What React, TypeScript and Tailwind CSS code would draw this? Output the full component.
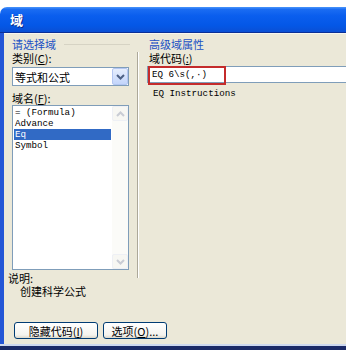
import React from "react";

const cjk = { fontFamily: '"Noto Sans CJK SC", "Noto Sans", sans-serif' };
const mono = { fontFamily: '"Liberation Mono", "DejaVu Sans Mono", monospace' };

function Chevron({ color, up }: { color: string; up?: boolean }) {
  return (
    <svg width="9" height="6" viewBox="0 0 9 6">
      <path
        d={up ? "M1 5 L4.5 1.5 L8 5" : "M1 1 L4.5 4.5 L8 1"}
        fill="none"
        stroke={color}
        strokeWidth="2"
      />
    </svg>
  );
}

export default function App() {
  return (
    <div className="w-[346px] h-[350px] bg-white overflow-hidden flex flex-col" style={cjk}>
      <div className="h-[7px] shrink-0 bg-white" />
      <div className="h-[26px] shrink-0 rounded-tl-[7px] border-b border-[#0a2f96] bg-[linear-gradient(to_bottom,#4a95fa_0%,#1a6cf2_10%,#0a5eee_35%,#0457e6_75%,#0a4fd4_100%)] flex items-center pl-[10px]">
        <span className="text-white font-bold text-[13px] leading-[13px] [text-shadow:1px_1px_0_#0a2a8a]">域</span>
      </div>
      <div className="flex-1 flex border-l-[4px] border-[#2456d6] bg-[#ebe8d8]">
        <div className="flex-1 flex flex-col border-t border-[#f8f6ee]">
          <div className="flex pt-[4px] pl-[8px]">
            {/* left column */}
            <div className="w-[118px] flex flex-col text-[11px] leading-[12px] text-black">
              <div className="h-[12px] flex items-center">
                <span className="text-[#2050c4] whitespace-nowrap">请选择域</span>
                <div className="flex-1 ml-[8px] h-px bg-[#d6d3c4]" />
              </div>
              <div className="mt-[2px] h-[12px] whitespace-nowrap">
                类别(<span className="underline">C</span>):
              </div>
              <div className="mt-[3px] w-[117px] h-[19px] bg-white border border-[#7f9db9] flex items-center">
                <span className="flex-1 pl-[2px] text-[11px] leading-[12px]">等式和公式</span>
                <div className="w-[16px] h-[17px] rounded-[2px] border border-[#b3c6f2] bg-[linear-gradient(to_bottom,#e6eefd,#c3d5fb)] flex items-center justify-center">
                  <Chevron color="#4d6185" />
                </div>
              </div>
              <div className="mt-[6px] h-[12px] whitespace-nowrap">
                域名(<span className="underline">F</span>):
              </div>
              <div className="mt-[1px] w-[117px] h-[165px] bg-white border border-[#7f9db9] flex">
                <div className="flex-1 flex flex-col pt-[1px] pl-[1px] pr-[1px] text-[9.2px] leading-[11px]" style={mono}>
                  <div className="h-[11px] pl-[1px] whitespace-nowrap">= (Formula)</div>
                  <div className="h-[11px] pl-[1px]">Advance</div>
                  <div className="h-[11px] pl-[1px] bg-[#316ac5] text-white">Eq</div>
                  <div className="h-[11px] pl-[1px]">Symbol</div>
                </div>
                <div className="w-[16px] bg-[#fbfbf8] flex flex-col justify-between">
                  <div className="h-[15px] border border-[#eef0f5] rounded-[2px] bg-[#f7f7f3] flex items-center justify-center">
                    <Chevron color="#c9ccd4" up />
                  </div>
                  <div className="h-[15px] border border-[#eef0f5] rounded-[2px] bg-[#f7f7f3] flex items-center justify-center">
                    <Chevron color="#c9ccd4" />
                  </div>
                </div>
              </div>
              <div className="mt-[2px] -ml-[4px] h-[12px]">说明:</div>
              <div className="mt-[1px] ml-[8px] h-[12px] whitespace-nowrap">创建科学公式</div>
            </div>
            {/* separator */}
            <div className="ml-[7px] mt-[14px] h-[226px] w-[2px] border-l border-[#aca899] border-r border-r-white" />
            {/* right column */}
            <div className="ml-[8px] flex-1 flex flex-col text-[11px] leading-[12px] text-black">
              <div className="h-[12px] pl-[2px] flex items-center">
                <span className="text-[#2050c4] whitespace-nowrap">高级域属性</span>
              </div>
              <div className="mt-[2px] h-[12px] pl-[2px] whitespace-nowrap">
                域代码(<span className="underline">:</span>)
              </div>
              <div className="mt-[2px] relative h-[17px] bg-white border-y border-l border-[#7f9db9] flex items-center">
                <span className="pl-[4px] text-[9.2px] leading-[11px] whitespace-nowrap" style={mono}>
                  EQ 6\s(,·)
                </span>
                <div className="absolute left-0 -top-[1px] w-[78px] h-[19px] border-2 border-[#c42b2b]" />
              </div>
              <div className="mt-[5px] h-[11px] pl-[6px] text-[9.2px] leading-[11px] whitespace-nowrap" style={mono}>
                EQ Instructions
              </div>
            </div>
          </div>
          {/* buttons */}
          <div className="mt-[25px] pl-[10px] flex gap-[5px] text-[11px] leading-[12px]">
            <div className="w-[84px] h-[17px] rounded-[3px] border border-[#003c74] bg-[linear-gradient(to_bottom,#ffffff,#f4f3ee_80%,#dcd8cb)] flex items-center justify-center whitespace-nowrap">
              隐藏代码(<span className="underline">I</span>)
            </div>
            <div className="w-[64px] h-[17px] rounded-[3px] border border-[#003c74] bg-[linear-gradient(to_bottom,#ffffff,#f4f3ee_80%,#dcd8cb)] flex items-center justify-center whitespace-nowrap">
              选项(<span className="underline">O</span>)...
            </div>
          </div>
        </div>
      </div>
      <div className="h-[2px] shrink-0 bg-[#cdd8ee]" />
      <div className="h-[4px] shrink-0 bg-[#1a2a66]" />
    </div>
  );
}
